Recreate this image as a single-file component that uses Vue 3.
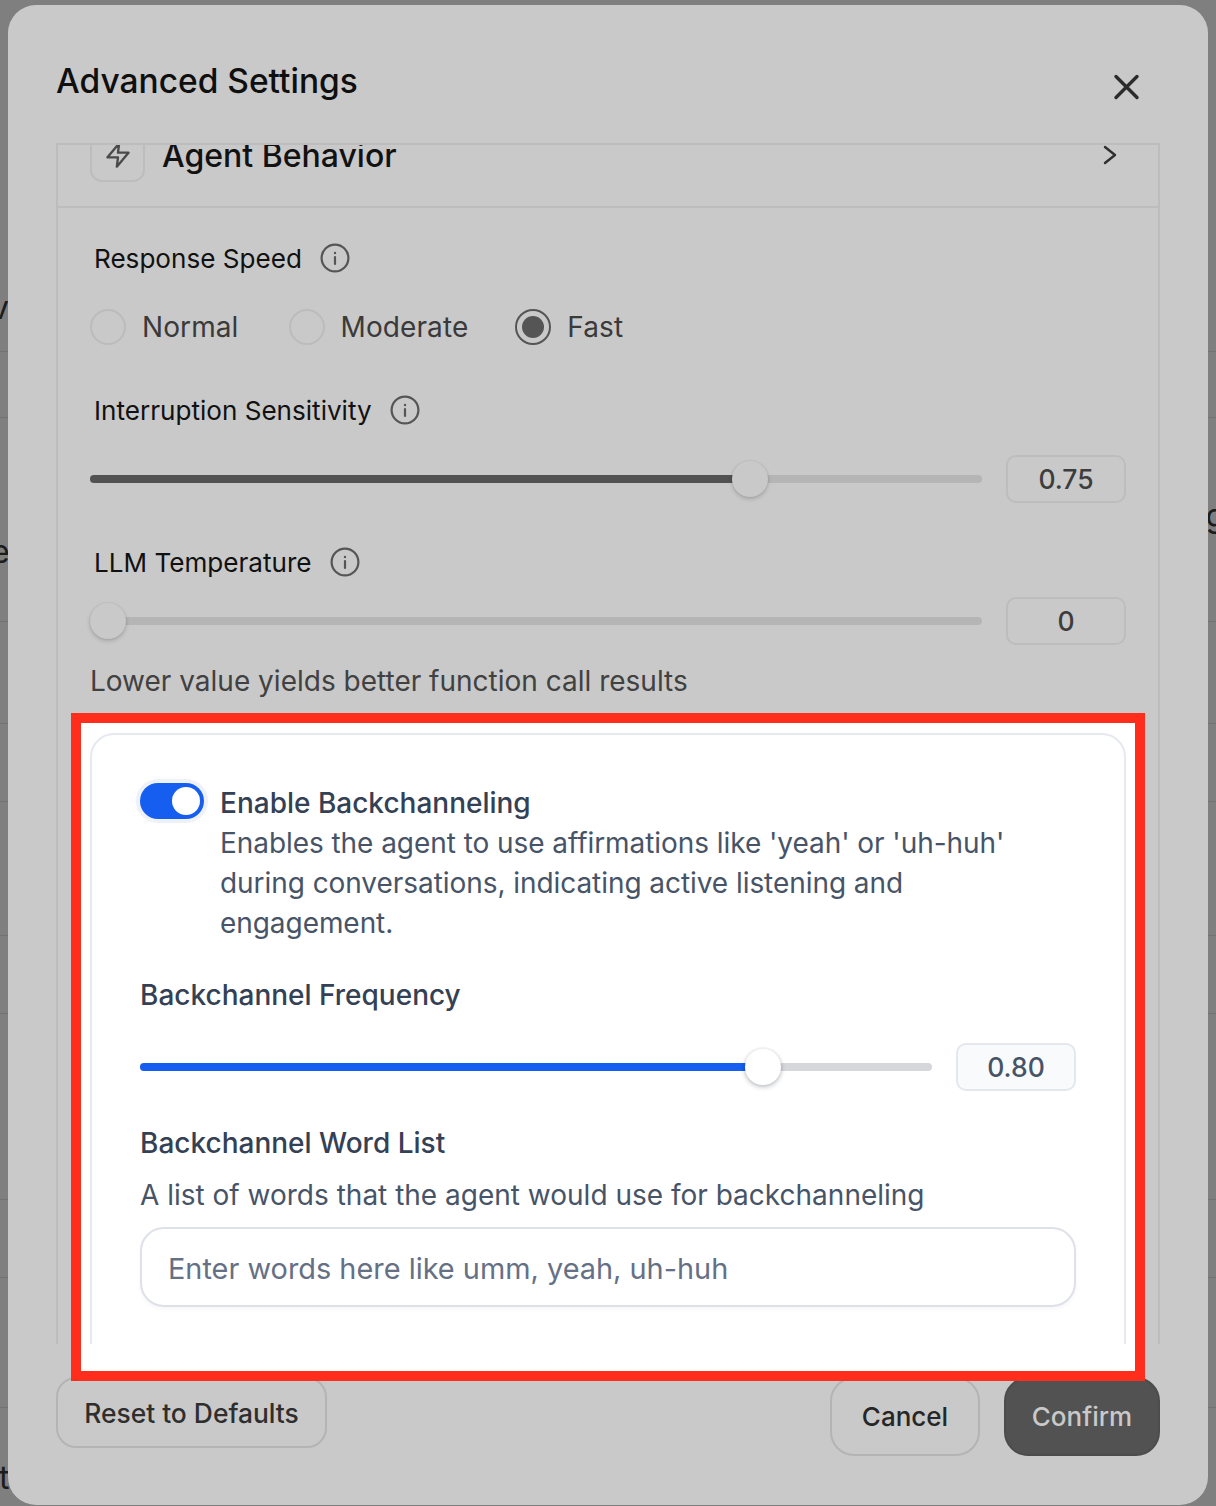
<script setup>
const lines = [351, 417, 621, 723, 801, 935, 1013, 1199, 1277, 1407]
const slivers = [
  { ch: 'v', side: 'left', off: -9, top: 289 },
  { ch: 'e', side: 'left', off: -9, top: 533 },
  { ch: 't', side: 'left', off: -1, top: 1459 },
  { ch: 'g', side: 'right', off: -9, top: 497 }
]
const thumb = v => ({ left: `calc((100% - 36px) * ${v})` })
const fill = v => ({ width: `calc((100% - 36px) * ${v} + 18px)` })
</script>

<template>
  <div class="page">
    <div class="backdrop">
      <div v-for="y in lines" :key="y" class="bg-line" :style="{ top: y + 'px' }"></div>
      <span v-for="s in slivers" :key="s.ch" class="bg-letter" :style="{ [s.side]: s.off + 'px', top: s.top + 'px' }">{{ s.ch }}</span>
    </div>
    <div class="dialog">
      <div class="frame"></div>
      <div class="top">
        <h2 class="title">Advanced Settings</h2>
        <svg class="close" width="32" height="32" viewBox="0 0 32 32" fill="none" stroke="#2b2b2b" stroke-width="3.4" stroke-linecap="round"><path d="M6 5.5l21 21M27 5.5l-21 21" /></svg>
      </div>
      <div class="panel">
        <div class="head">
          <div class="head-row">
            <div class="icon-box">
              <svg width="28" height="28" viewBox="0 0 24 24" fill="none" stroke="#4a4a4a" stroke-width="2" stroke-linejoin="round" stroke-linecap="round"><path d="M13 2L3 14h9l-1 8 10-12h-9l1-8z" /></svg>
            </div>
            <span class="head-text">Agent Behavior</span>
            <svg class="chev" width="14" height="20" viewBox="0 0 14 20" fill="none" stroke="#2f2f2f" stroke-width="2.4" stroke-linecap="round" stroke-linejoin="round"><path d="M2 2l10 8-10 8" /></svg>
          </div>
        </div>
        <div class="section">
          <div class="label first">
            <span>Response Speed</span>
            <svg class="info" width="30" height="30" viewBox="0 0 30 30" fill="none" stroke="#555" stroke-width="2.2"><circle cx="15" cy="15" r="13.4" /><path d="M15 14v7" stroke-linecap="round" /><circle cx="15" cy="10" r="1.2" fill="#555" stroke="none" /></svg>
          </div>
          <div class="radios">
            <div class="radio-item"><span class="radio"></span><span>Normal</span></div>
            <div class="radio-item"><span class="radio"></span><span>Moderate</span></div>
            <div class="radio-item"><span class="radio on"><i></i></span><span>Fast</span></div>
          </div>
          <div class="label gap45">
            <span>Interruption Sensitivity</span>
            <svg class="info" width="30" height="30" viewBox="0 0 30 30" fill="none" stroke="#555" stroke-width="2.2"><circle cx="15" cy="15" r="13.4" /><path d="M15 14v7" stroke-linecap="round" /><circle cx="15" cy="10" r="1.2" fill="#555" stroke="none" /></svg>
          </div>
          <div class="slider-row gap25">
            <div class="track">
              <div class="fill" :style="fill(0.75)"></div>
              <div class="thumb" :style="thumb(0.75)"></div>
            </div>
            <div class="value">0.75</div>
          </div>
          <div class="label gap39">
            <span>LLM Temperature</span>
            <svg class="info" width="30" height="30" viewBox="0 0 30 30" fill="none" stroke="#555" stroke-width="2.2"><circle cx="15" cy="15" r="13.4" /><path d="M15 14v7" stroke-linecap="round" /><circle cx="15" cy="10" r="1.2" fill="#555" stroke="none" /></svg>
          </div>
          <div class="slider-row gap15">
            <div class="track">
              <div class="thumb" :style="thumb(0)"></div>
            </div>
            <div class="value">0</div>
          </div>
          <p class="help">Lower value yields better function call results</p>
          <div class="card">
            <div class="toggle-row">
              <span class="toggle"><i></i></span>
              <div class="toggle-text">
                <div class="card-label">Enable Backchanneling</div>
                <div class="card-desc tight">Enables the agent to use affirmations like 'yeah' or 'uh-huh' during conversations, indicating active listening and engagement.</div>
              </div>
            </div>
            <div class="card-label gap32">Backchannel Frequency</div>
            <div class="slider-row gap28">
              <div class="track light">
                <div class="fill blue" :style="fill(0.8)"></div>
                <div class="thumb white" :style="thumb(0.8)"></div>
              </div>
              <div class="value light-value">0.80</div>
            </div>
            <div class="card-label gap32">Backchannel Word List</div>
            <div class="card-desc gap12">A list of words that the agent would use for backchanneling</div>
            <input class="words" placeholder="Enter words here like umm, yeah, uh-huh" />
          </div>
        </div>
      </div>
      <div class="footer">
        <button class="btn reset">Reset to Defaults</button>
        <div class="actions">
          <button class="btn cancel">Cancel</button>
          <button class="btn confirm">Confirm</button>
        </div>
      </div>
    </div>
  </div>
</template>

<style>
html, body { margin: 0; background: #7f7f7f; }
</style>

<style scoped>
.page {
  position: relative;
  width: 1216px;
  height: 1506px;
  overflow: hidden;
  background: #7f7f7f;
  font-family: Inter, "Liberation Sans", sans-serif;
  padding: 5px 8px 0;
  box-sizing: border-box;
}
.backdrop { position: absolute; inset: 0; }
.bg-line { position: absolute; left: 0; right: 0; height: 1px; background: #6f7278; }
.bg-letter { position: absolute; font-size: 32px; line-height: 38px; color: #1c1c1c; }
.dialog {
  position: relative;
  z-index: 1;
  width: 1200px;
  height: 1500px;
  box-sizing: border-box;
  padding: 0 48px;
  background: #c9c9c9;
  border-radius: 28px;
}
.frame {
  position: absolute;
  z-index: 1;
  left: 63px;
  top: 708px;
  width: 1074px;
  height: 668px;
  box-sizing: border-box;
  background: #fff;
  border: 10px solid #ff2d1c;
}
.top {
  height: 138px;
  padding-top: 54px;
  box-sizing: border-box;
  display: flex;
  justify-content: space-between;
  align-items: flex-start;
}
.title {
  margin: 0;
  font-size: 33.5px;
  line-height: 44px;
  font-weight: 500;
  color: #0f0f0f;
}
.close { margin: 12px 18px 0 0; }
.panel {
  height: 1201px;
  box-sizing: border-box;
  border: 2px solid #bdbdbd;
  border-bottom: none;
  overflow: hidden;
}
.head {
  display: flow-root;
  height: 61px;
  box-sizing: content-box;
  border-bottom: 2px solid #bdbdbd;
  padding: 0 41px 0 32px;
}
.head-row {
  margin-top: -17px;
  height: 54px;
  display: flex;
  align-items: center;
}
.icon-box {
  width: 55px;
  height: 54px;
  box-sizing: border-box;
  border: 2px solid #bdbdbd;
  border-radius: 12px;
  display: flex;
  align-items: center;
  justify-content: center;
}
.head-text {
  margin-left: 17px;
  font-size: 32px;
  font-weight: 500;
  color: #121212;
}
.chev { margin-left: auto; }
.section { padding: 0 32px; }
.label {
  display: flex;
  align-items: center;
  height: 40px;
  padding-left: 4px;
  font-size: 26.1px;
  font-weight: 400;
  color: #111;
}
.info { margin-left: 18px; flex: none; }
.first { margin-top: 30px; }
.gap45 { margin-top: 45px; }
.gap39 { margin-top: 39px; }
.gap25 { margin-top: 25px; }
.gap15 { margin-top: 15px; }
.gap32 { margin-top: 32px; }
.gap28 { margin-top: 28px; }
.gap12 { margin-top: 12px; }
.radios {
  margin-top: 31px;
  display: flex;
  gap: 48px;
  height: 36px;
  font-size: 28px;
  letter-spacing: 0.1px;
  color: #3a3a3a;
}
.radio-item { display: flex; align-items: center; gap: 16px; }
.radio-item:first-child { margin-right: 2px; }
.radio-item:nth-child(2) { margin-right: -1px; }
.radio {
  width: 36px;
  height: 36px;
  box-sizing: border-box;
  border: 2px solid #bcbcbc;
  border-radius: 50%;
  display: flex;
  align-items: center;
  justify-content: center;
}
.radio.on { border-color: #555; }
.radio.on i { width: 22px; height: 22px; border-radius: 50%; background: #555; }
.slider-row { display: flex; align-items: center; gap: 24px; height: 48px; }
.track {
  position: relative;
  flex: 1;
  height: 8px;
  border-radius: 4px;
  background: #b5b5b5;
}
.fill { height: 100%; border-radius: 4px 0 0 4px; background: #525252; }
.thumb {
  position: absolute;
  top: -14px;
  width: 36px;
  height: 36px;
  border-radius: 50%;
  background: #c9c9c9;
  box-shadow: 0 2px 4px rgba(0, 0, 0, 0.18), 0 0 0 1px rgba(0, 0, 0, 0.03);
}
.value {
  width: 120px;
  height: 48px;
  flex: none;
  box-sizing: border-box;
  border: 2px solid #bdbdbd;
  border-radius: 10px;
  display: flex;
  align-items: center;
  justify-content: center;
  font-size: 26.5px;
  font-weight: 500;
  color: #3d3d3d;
}
.help {
  margin: 16px 0 0;
  font-size: 28px;
  line-height: 40px;
  color: #414141;
}
.card {
  position: relative;
  z-index: 2;
  margin-top: 32px;
  border: 2px solid #e6e9ef;
  border-radius: 24px;
  padding: 48px 48px 96px;
  background: #fff;
}
.toggle-row { display: flex; align-items: flex-start; gap: 16px; }
.toggle {
  flex: none;
  width: 64px;
  height: 36px;
  border-radius: 18px;
  background: #155eef;
  box-shadow: 0 0 0 4px #eef1f6;
  display: flex;
  align-items: center;
  justify-content: flex-end;
  padding-right: 4px;
  box-sizing: border-box;
}
.toggle i { width: 28px; height: 28px; border-radius: 50%; background: #fff; }
.toggle-text { flex: 1; max-width: 800px; }
.card-label {
  font-size: 28px;
  line-height: 40px;
  font-weight: 500;
  color: #344054;
}
.card-desc {
  font-size: 28px;
  line-height: 40px;
  color: #475467;
}
.card-desc.tight { letter-spacing: -0.06px; }
.track.light { background: #d5d7da; }
.fill.blue { background: #155eef; }
.thumb.white { background: #fff; box-shadow: 0 2px 5px rgba(16, 24, 40, 0.25), 0 0 0 2px rgba(16, 24, 40, 0.03); }
.light-value { background: #f9fafb; border-color: #e4e7ec; color: #475467; }
.words {
  display: block;
  width: 100%;
  height: 80px;
  margin-top: 12px;
  box-sizing: border-box;
  padding: 2px 26px 0;
  border: 2px solid #dfe1e8;
  border-radius: 24px;
  background: #fff;
  box-shadow: 0 2px 4px rgba(16, 24, 40, 0.04);
  font-family: inherit;
  font-size: 28.9px;
  color: #475467;
  outline: none;
}
.words::placeholder { color: #667085; opacity: 1; }
.footer {
  margin-top: 33px;
  display: flex;
  justify-content: space-between;
  align-items: flex-start;
}
.actions { display: flex; gap: 24px; }
.btn {
  font-family: inherit;
  font-size: 26px;
  font-weight: 500;
  box-sizing: border-box;
  border-radius: 24px;
  padding: 0;
  cursor: pointer;
}
.reset {
  width: 271px;
  height: 71px;
  border: 2px solid #b4b4b4;
  border-radius: 20px;
  background: transparent;
  font-size: 26.4px;
  color: #2e2e2e;
}
.cancel {
  width: 150px;
  height: 79px;
  border: 2px solid #b4b4b4;
  background: transparent;
  color: #262626;
}
.confirm {
  width: 156px;
  height: 79px;
  border: 2px solid #4c4c4c;
  background: #525252;
  color: #c9c9c9;
}
</style>
